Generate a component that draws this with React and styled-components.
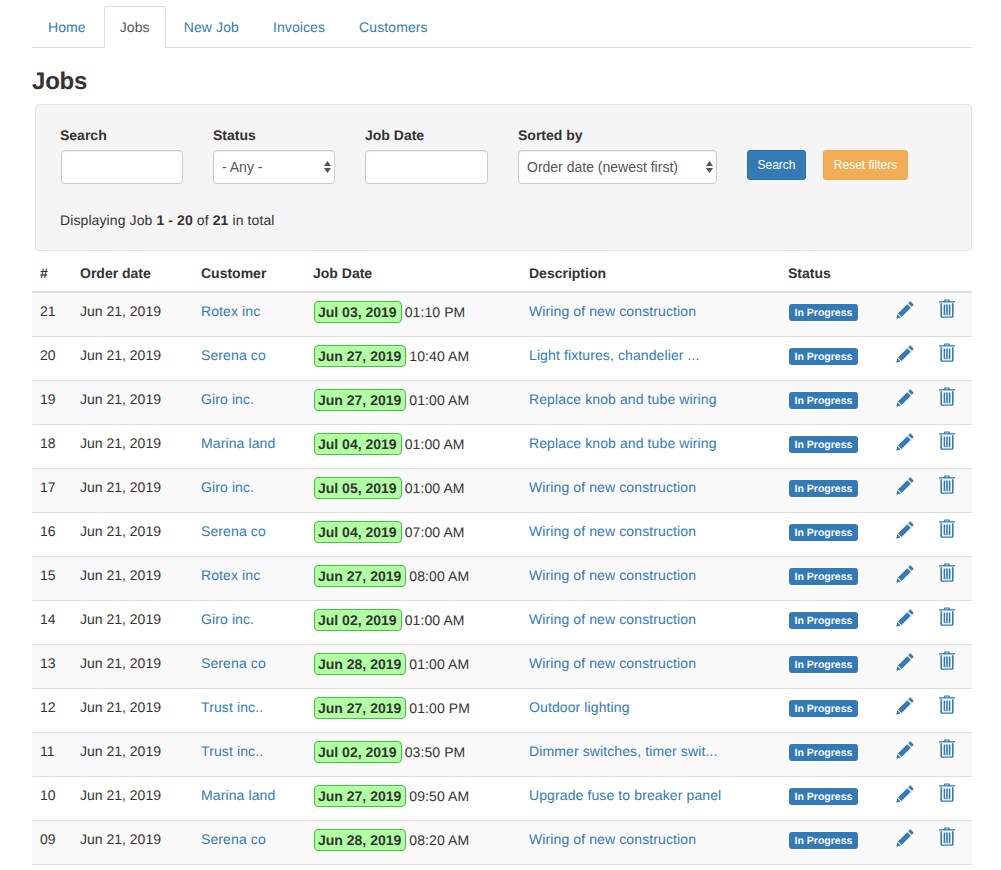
import React from "react";
import styled, { createGlobalStyle } from "styled-components";

const GlobalStyle = createGlobalStyle`
  html, body {
    margin: 0;
    padding: 0;
    background: #fff;
  }
  body {
    font-family: "Liberation Sans", Arial, sans-serif;
    font-size: 14px;
    line-height: 20px;
    color: #333;
    text-rendering: geometricPrecision;
  }
`;

const Page = styled.div`
  width: 940px;
  margin-left: 32px;
  padding-top: 6px;
`;

const Tabs = styled.ul`
  display: flex;
  list-style: none;
  margin: 0;
  padding: 0;
  height: 41px;
  border-bottom: 1px solid #ddd;
`;

const Tab = styled.li`
  height: 42px;
  margin-right: 2px;
  padding: 0 15px;
  line-height: 41px;
  letter-spacing: 0.1px;
  box-sizing: border-box;
  color: ${(p) => (p.$active ? "#555" : "#337ab7")};
  background: ${(p) => (p.$active ? "#fff" : "transparent")};
  border: 1px solid ${(p) => (p.$active ? "#ddd" : "transparent")};
  border-bottom-color: ${(p) => (p.$active ? "#fff" : "transparent")};
  border-radius: 4px 4px 0 0;
`;

const Title = styled.h3`
  margin: 21px 0 9px;
  font-size: 24px;
  line-height: 26px;
  font-weight: 700;
  letter-spacing: -0.2px;
  color: #333;
`;

const Well = styled.div`
  box-sizing: border-box;
  margin-left: 3px;
  height: 147px;
  padding: 20px 25px;
  background: #f5f5f5;
  border: 1px solid #e3e3e3;
  border-radius: 4px;
`;

const FilterRow = styled.div`
  display: flex;
  align-items: flex-start;
`;

const Field = styled.div`
  width: ${(p) => p.$width}px;
  margin-right: 30px;

  &:first-child label {
    margin-left: -1px;
  }
`;

const FieldLabel = styled.label`
  display: block;
  margin-bottom: 5px;
  font-weight: 700;
`;

const TextInput = styled.input`
  display: block;
  box-sizing: border-box;
  width: 100%;
  height: 34px;
  background: #fff;
  border: 1px solid #ccc;
  border-radius: 4px;
  box-shadow: inset 0 1px 1px rgba(0, 0, 0, 0.075);
`;

const SelectWrap = styled.div`
  position: relative;
  height: 34px;
`;

const Select = styled.select`
  display: block;
  box-sizing: border-box;
  width: 100%;
  height: 34px;
  padding: 0 20px 0 8px;
  appearance: none;
  font-family: inherit;
  font-size: 14px;
  color: #555;
  background: #fff;
  border: 1px solid #ccc;
  border-radius: 4px;
  box-shadow: inset 0 1px 1px rgba(0, 0, 0, 0.075);
`;

const SelectArrows = styled.svg`
  position: absolute;
  top: 11px;
  right: 4px;
  width: 7px;
  height: 12px;
  pointer-events: none;
`;

const Button = styled.button`
  box-sizing: border-box;
  flex: none;
  width: ${(p) => p.$width}px;
  height: 30px;
  margin: 25px 17px 0 0;
  padding: 0;
  font-family: inherit;
  font-size: 12px;
  color: #fff;
  background: ${(p) => (p.$warning ? "#f0ad55" : "#337ab7")};
  border: 1px solid ${(p) => (p.$warning ? "#eeaa50" : "#2e6da4")};
  border-radius: 3px;
`;

const Summary = styled.p`
  margin: 26px 0 0 -1px;
  letter-spacing: 0.1px;
`;

const Table = styled.table`
  width: 940px;
  table-layout: fixed;
  border-collapse: collapse;
  border-spacing: 0;
`;

const HeadCell = styled.th`
  height: 41px;
  padding: 4px 8px 0;
  box-sizing: border-box;
  text-align: left;
  font-weight: 700;
  vertical-align: middle;
  border-bottom: 2px solid #ddd;
`;

const Row = styled.tr`
  background: ${(p) => (p.$striped ? "#f9f9f9" : "#fff")};
`;

const Cell = styled.td`
  height: 44px;
  box-sizing: border-box;
  padding: 8px;
  vertical-align: top;
  white-space: nowrap;
  border-bottom: 1px solid #ddd;
`;

const DateCell = styled(Cell)`
  padding-left: 9px;
  letter-spacing: 0.1px;
`;

const Link = styled.span`
  color: #337ab7;
  letter-spacing: 0.11px;
`;

const DateChip = styled.span`
  display: inline-block;
  box-sizing: border-box;
  height: 22px;
  margin-right: 3px;
  padding: 0 4px 0 3px;
  line-height: 20px;
  font-weight: 700;
  letter-spacing: 0;
  background: #b2ffa3;
  border: 1px solid #3cc73c;
  border-radius: 4px;
`;

const Badge = styled.span`
  display: block;
  box-sizing: border-box;
  width: 69px;
  height: 17px;
  margin: 3px 0 0 1px;
  font-size: 10.5px;
  font-weight: 700;
  line-height: 18px;
  text-align: center;
  color: #fff;
  background: #337ab7;
  border-radius: 3px;
`;

const IconCell = styled(Cell)`
  padding: ${(p) => p.$top}px 0 0 ${(p) => p.$left}px;
`;

const Icon = styled.svg`
  display: block;
  color: #337ab7;
  fill: currentColor;
`;

const PencilIcon = () => (
  <Icon width="18" height="18" viewBox="0 0 18 18">
    <path d="M13.6 0.8 C14 0.4 14.4 0.4 14.8 0.8 L17.2 3.2 C17.6 3.6 17.6 4 17.2 4.4 L15.8 5.8 L12.2 2.2 Z" />
    <path d="M11.2 3.2 L14.8 6.8 L5.6 16 L2 12.4 Z" />
    <path d="M1.4 13.3 L4.7 16.6 L0.2 17.8 Z" />
  </Icon>
);

const TrashIcon = () => (
  <Icon width="16" height="19" viewBox="0 0 16 19">
    <path d="M4.8 2.2 L5.6 0.4 H10.4 L11.2 2.2 H16 V3.6 H0 V2.2 Z M6.4 2.2 H9.6 L9.2 1.4 H6.8 Z" />
    <path d="M1.4 4.2 H3 V16.8 C3 17.2 3.2 17.4 3.6 17.4 H12.4 C12.8 17.4 13 17.2 13 16.8 V4.2 H14.6 V17 C14.6 18 14 18.8 13 18.8 H3 C2 18.8 1.4 18 1.4 17 Z" />
    <path d="M4.6 5.4 H6.2 V16.2 H4.6 Z M7.2 5.4 H8.8 V16.2 H7.2 Z M9.8 5.4 H11.4 V16.2 H9.8 Z" />
  </Icon>
);

const jobs = [
  ["21", "Rotex inc", "Jul 03, 2019", "01:10 PM", "Wiring of new construction"],
  ["20", "Serena co", "Jun 27, 2019", "10:40 AM", "Light fixtures, chandelier ..."],
  ["19", "Giro inc.", "Jun 27, 2019", "01:00 AM", "Replace knob and tube wiring"],
  ["18", "Marina land", "Jul 04, 2019", "01:00 AM", "Replace knob and tube wiring"],
  ["17", "Giro inc.", "Jul 05, 2019", "01:00 AM", "Wiring of new construction"],
  ["16", "Serena co", "Jul 04, 2019", "07:00 AM", "Wiring of new construction"],
  ["15", "Rotex inc", "Jun 27, 2019", "08:00 AM", "Wiring of new construction"],
  ["14", "Giro inc.", "Jul 02, 2019", "01:00 AM", "Wiring of new construction"],
  ["13", "Serena co", "Jun 28, 2019", "01:00 AM", "Wiring of new construction"],
  ["12", "Trust inc..", "Jun 27, 2019", "01:00 PM", "Outdoor lighting"],
  ["11", "Trust inc..", "Jul 02, 2019", "03:50 PM", "Dimmer switches, timer swit..."],
  ["10", "Marina land", "Jun 27, 2019", "09:50 AM", "Upgrade fuse to breaker panel"],
  ["09", "Serena co", "Jun 28, 2019", "08:20 AM", "Wiring of new construction"],
];

const Arrows = () => (
  <SelectArrows viewBox="0 0 7 12">
    <path d="M3.5 0 L7 5 H0 Z M0 7 H7 L3.5 12 Z" fill="#555" />
  </SelectArrows>
);

const App = () => {
  return (
    <Page>
      <GlobalStyle />
      <Tabs>
        <Tab>Home</Tab>
        <Tab $active>Jobs</Tab>
        <Tab>New Job</Tab>
        <Tab>Invoices</Tab>
        <Tab>Customers</Tab>
      </Tabs>
      <Title>Jobs</Title>
      <Well>
        <FilterRow>
          <Field $width={122}>
            <FieldLabel>Search</FieldLabel>
            <TextInput />
          </Field>
          <Field $width={122}>
            <FieldLabel>Status</FieldLabel>
            <SelectWrap>
              <Select defaultValue="any">
                <option value="any">- Any -</option>
              </Select>
              <Arrows />
            </SelectWrap>
          </Field>
          <Field $width={123}>
            <FieldLabel>Job Date</FieldLabel>
            <TextInput />
          </Field>
          <Field $width={199}>
            <FieldLabel>Sorted by</FieldLabel>
            <SelectWrap>
              <Select defaultValue="newest">
                <option value="newest">Order date (newest first)</option>
              </Select>
              <Arrows />
            </SelectWrap>
          </Field>
          <Button $width={59}>Search</Button>
          <Button $width={85} $warning>Reset filters</Button>
        </FilterRow>
        <Summary>
          Displaying Job <b>1 - 20</b> of <b>21</b> in total
        </Summary>
      </Well>
      <Table>
        <colgroup>
          <col width="40" />
          <col width="121" />
          <col width="112" />
          <col width="216" />
          <col width="259" />
          <col width="104" />
          <col width="44" />
          <col width="44" />
        </colgroup>
        <thead>
          <tr>
            <HeadCell>#</HeadCell>
            <HeadCell>Order date</HeadCell>
            <HeadCell>Customer</HeadCell>
            <HeadCell>Job Date</HeadCell>
            <HeadCell>Description</HeadCell>
            <HeadCell>Status</HeadCell>
            <HeadCell />
            <HeadCell />
          </tr>
        </thead>
        <tbody>
          {jobs.map(([id, customer, date, time, description], i) => (
            <Row key={id} $striped={i % 2 === 0}>
              <Cell>{id}</Cell>
              <Cell>Jun 21, 2019</Cell>
              <Cell><Link>{customer}</Link></Cell>
              <DateCell><DateChip>{date}</DateChip>{time}</DateCell>
              <Cell><Link>{description}</Link></Cell>
              <Cell><Badge>In Progress</Badge></Cell>
              <IconCell $top={8} $left={12}><PencilIcon /></IconCell>
              <IconCell $top={6} $left={11}><TrashIcon /></IconCell>
            </Row>
          ))}
        </tbody>
      </Table>
    </Page>
  );
};

export default App;
